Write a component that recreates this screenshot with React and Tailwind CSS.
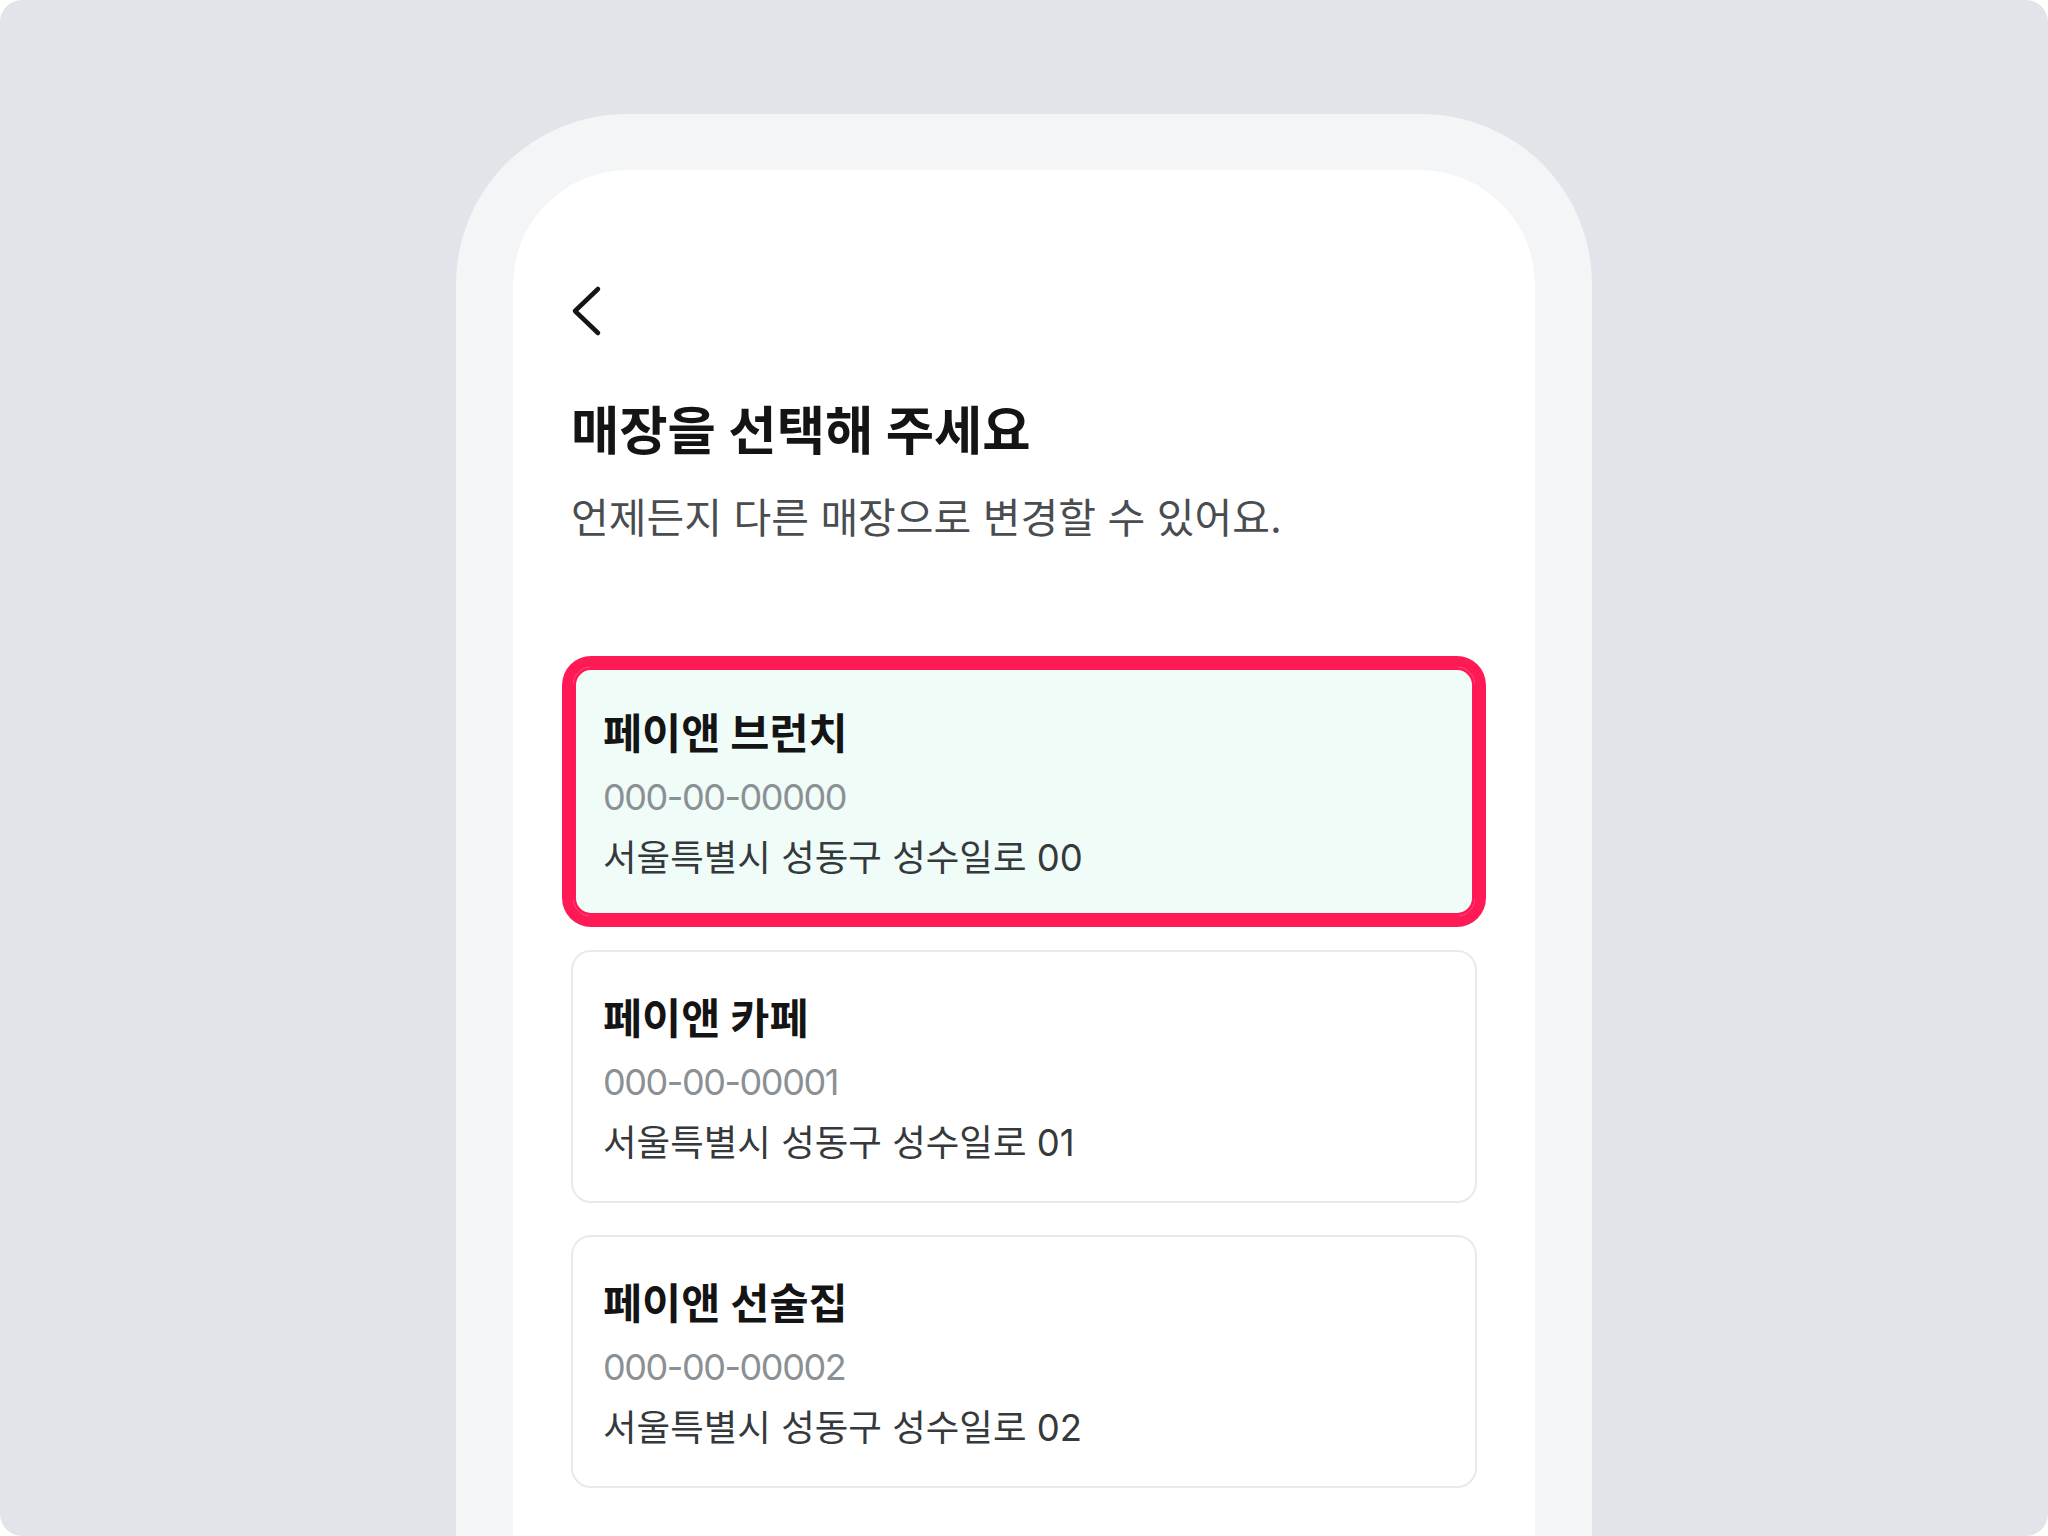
import React from "react";

const stores = [
  { name: "페이앤 브런치", num: "000-00-00000", addr: "서울특별시 성동구 성수일로 00", selected: true },
  { name: "페이앤 카페", num: "000-00-00001", addr: "서울특별시 성동구 성수일로 01" },
  { name: "페이앤 선술집", num: "000-00-00002", addr: "서울특별시 성동구 성수일로 02" },
];

function StoreCard({ s }) {
  return (
    <div
      className={
        s.selected
          ? "h-[253px] rounded-[20px] border-2 border-[#ff1a55] bg-[#f0fcf8] ring-[9px] ring-[#ff1a55] inset-ring-[3px] inset-ring-[#ff1a55] px-[30px] pt-[35px]"
          : "h-[253px] rounded-[20px] border-2 border-[#e9eaeb] bg-white px-[30px] pt-[35px]"
      }
    >
      <div className="h-[64px] text-[42.5px] leading-[64px] font-bold text-[#141414]">{s.name}</div>
      <div className="h-[62px] text-[36px] leading-[62px] tracking-[-0.04em] text-[#8b9094]">{s.num}</div>
      <div className="h-[60px] text-[36.5px] leading-[60px] text-[#36393c]">{s.addr}</div>
    </div>
  );
}

export default function App() {
  return (
    <div className="w-[2048px] h-[1536px] bg-white overflow-hidden font-['Inter','Noto_Sans_CJK_KR',sans-serif]">
      <div className="w-full h-full rounded-[22px] bg-[#e1e4e9] flex justify-center pt-[114px] overflow-hidden">
        <div className="w-[1136px] h-[1500px] shrink-0 rounded-t-[170px] bg-[#f3f5f7] px-[57px] pt-[56px] flex flex-col">
          <div className="flex-1 bg-white rounded-t-[115px] px-[58px] pt-[115px] flex flex-col">
            <svg width="32" height="52" viewBox="0 0 32 52" fill="none" className="block shrink-0">
              <path d="M27 4 L4 26 L27 48" stroke="#151515" strokeWidth="4.5" strokeLinecap="round" strokeLinejoin="round" />
            </svg>
            <h1 className="mt-[59px] h-[70px] shrink-0 text-[52.5px] leading-[70px] font-bold text-[#141414]">매장을 선택해 주세요</h1>
            <p className="mt-[28px] h-[48px] shrink-0 text-[41px] leading-[48px] text-[#4a4d50]">언제든지 다른 매장으로 변경할 수 있어요.</p>
            <div className="mt-[123px] flex flex-col gap-[32px]">
              {stores.map((s) => (
                <StoreCard key={s.num} s={s} />
              ))}
            </div>
          </div>
        </div>
      </div>
    </div>
  );
}
